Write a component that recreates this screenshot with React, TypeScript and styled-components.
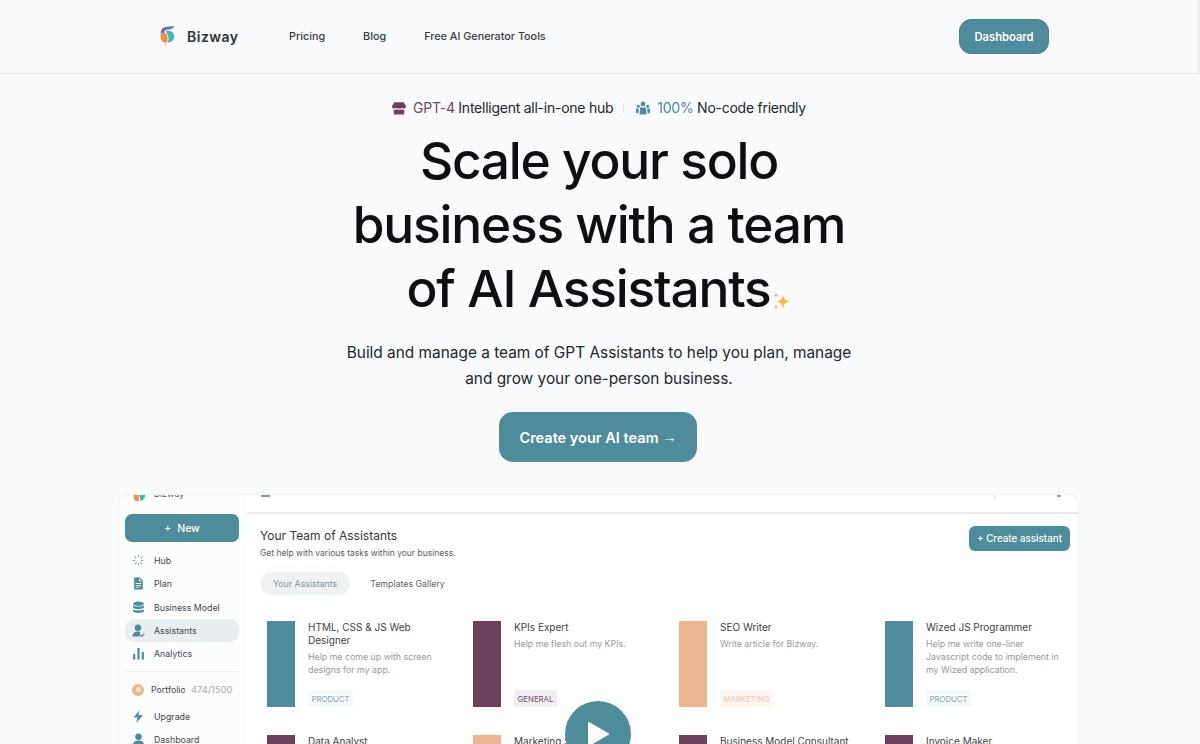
import React from 'react';
import styled, { createGlobalStyle } from 'styled-components';

const teal = '#4f8c9b';
const plum = '#6d415c';
const peach = '#ebb690';

const GlobalStyle = createGlobalStyle`
  html, body {
    margin: 0;
    height: 744px;
    overflow: hidden;
    background: #f9fafc;
    font-family: Inter, "Noto Sans", sans-serif;
    color: #111418;
  }
  * { box-sizing: border-box; }
`;

const Page = styled.div`
  height: 744px;
  overflow: hidden;
  display: flex;
  flex-direction: column;
`;

const Nav = styled.header`
  height: 74px;
  flex: none;
  display: flex;
  align-items: center;
  padding: 0 149px 1px 159px;
  border-bottom: 1px solid #e3e5e8;
  border-right: 2px solid #eceef0;
`;

const Brand = styled.div`
  display: flex;
  align-items: center;
  gap: 12px;
  width: 130px;
  font-size: 14px;
  font-weight: 600;
  letter-spacing: 0.5px;
  color: #2e3138;
`;

const NavLinks = styled.nav`
  display: flex;
  gap: 38px;
  flex: 1;
`;

const NavLink = styled.span`
  font-size: 10.8px;
  font-weight: 500;
  color: #3a3d44;
`;

const DashButton = styled.div`
  width: 90px;
  height: 35px;
  margin-top: 1px;
  border-radius: 12px;
  background: ${teal};
  border: 1px solid #47808e;
  color: #fff;
  font-size: 11.2px;
  font-weight: 600;
  display: flex;
  align-items: center;
  justify-content: center;
`;

const Hero = styled.section`
  display: flex;
  flex-direction: column;
  align-items: center;
  padding: 23px 2px 0 0;
`;

const BadgeRow = styled.div`
  display: flex;
  align-items: center;
  height: 21px;
  font-size: 14px;
  letter-spacing: -0.25px;
  color: #23262c;
`;

const Badge = styled.div`
  display: flex;
  align-items: center;
  gap: 7px;
`;

const BadgeDivider = styled.i`
  width: 1px;
  height: 12px;
  background: #e6e8ec;
  margin: 0 12px 0 10px;
`;

const Accent = styled.span<{ $color: string }>`
  color: ${(p) => p.$color};
`;

const Title = styled.h1`
  margin: 10px 0 0;
  font-size: 51.4px;
  line-height: 64px;
  font-weight: 500;
  letter-spacing: -1.2px;
  text-align: center;
  color: #0d0f12;
`;

const Sparkle = styled.svg`
  width: 19px;
  height: 19px;
  margin-left: 2px;
  vertical-align: -4px;
`;

const Lead = styled.p`
  margin: 20px 0 0;
  font-size: 15.4px;
  line-height: 26px;
  text-align: center;
  color: #23262c;
`;

const Cta = styled.div`
  margin: 20px 2px 0 0;
  width: 198px;
  height: 50px;
  border-radius: 14px;
  background: ${teal};
  color: #fff;
  font-size: 14.5px;
  font-weight: 600;
  display: flex;
  align-items: center;
  justify-content: center;
  gap: 4px;
`;

const CtaArrow = styled.span`
  font-family: "Liberation Sans", sans-serif;
  font-weight: 400;
  font-size: 14px;
`;

const PreviewWrap = styled.div`
  position: relative;
  margin: 32px 121px 0 118px;
  height: 250px;
  flex: none;
`;

const Preview = styled.div`
  height: 100%;
  overflow: hidden;
  display: grid;
  grid-template-columns: 128px 1fr;
  background: #fff;
  border: 1px solid #eef0f2;
  border-bottom: 0;
  border-radius: 10px 10px 0 0;
`;

const Sidebar = styled.aside`
  background: #fbfcfc;
  padding: 0 8px 0 6px;
  display: flex;
  flex-direction: column;
`;

const SideLogo = styled.div`
  height: 19px;
  flex: none;
  overflow: hidden;
  display: flex;
  align-items: flex-start;
  gap: 8px;
  padding-left: 8px;
  font-size: 9px;
  line-height: 12px;
  color: #55585e;
`;

const CutLogoText = styled.span`
  margin-top: -7px;
`;

const NewButton = styled.div`
  height: 28px;
  flex: none;
  border-radius: 7px;
  background: ${teal};
  color: #fff;
  font-size: 10.5px;
  font-weight: 500;
  display: flex;
  align-items: center;
  justify-content: center;
  gap: 6px;
  margin-bottom: 7px;
`;

const SideItem = styled.div<{ $active?: boolean }>`
  height: 23.3px;
  flex: none;
  display: flex;
  align-items: center;
  gap: 9px;
  padding-left: 7px;
  border-radius: 9px;
  font-size: 8.8px;
  color: #44474e;
  background: ${(p) => (p.$active ? '#e9eef0' : 'transparent')};
`;

const SideIcon = styled.svg`
  width: 13px;
  height: 13px;
  flex: none;
  fill: ${teal};
`;

const SideDivider = styled.hr`
  width: 100%;
  border: 0;
  border-top: 1px solid #eef0f2;
  margin: 6px 0 6px;
`;

const UsageRow = styled.div`
  height: 23px;
  flex: none;
  display: flex;
  align-items: center;
  gap: 7px;
  padding-left: 7px;
  font-size: 8.8px;
  color: #44474e;
  margin-bottom: 3px;
`;

const UsageDot = styled.span`
  width: 12px;
  height: 12px;
  border-radius: 50%;
  background: ${peach};
  flex: none;
  display: flex;
  align-items: center;
  justify-content: center;
  &::after {
    content: '';
    width: 5px;
    height: 5px;
    border-radius: 50%;
    background: #fbe6d6;
  }
`;

const UsageLabel = styled.span`
  width: 34px;
  overflow: hidden;
  white-space: nowrap;
`;

const UsageCount = styled.span`
  margin-left: -1px;
  font-size: 9.3px;
  color: #a9acb0;
`;

const Main = styled.main`
  display: flex;
  flex-direction: column;
  min-width: 0;
`;

const TopBar = styled.div`
  height: 19px;
  flex: none;
  border-bottom: 2px solid #e9eaec;
  display: flex;
  padding: 0 17px 0 14px;
  justify-content: space-between;
`;

const TopTick = styled.i`
  width: 9px;
  height: 2px;
  background: #7d9aa3;
`;

const TopRight = styled.div`
  width: 67px;
  height: 4px;
  border-left: 1px solid #d9dbde;
  display: flex;
  justify-content: flex-end;
  &::after {
    content: '';
    width: 4px;
    height: 2px;
    background: #9a9da2;
  }
`;

const MainBody = styled.div`
  padding: 12px 8px 0 13px;
  flex: 1;
  min-height: 0;
`;

const MainHead = styled.div`
  display: flex;
  justify-content: space-between;
  align-items: flex-start;
`;

const MainTitle = styled.div`
  margin-top: 1px;
  font-size: 12px;
  line-height: 17px;
  color: #33363c;
`;

const MainSub = styled.div`
  font-size: 8.5px;
  line-height: 14px;
  margin-top: 2px;
  color: #5a5d63;
`;

const CreateButton = styled.div`
  width: 101px;
  height: 25px;
  border-radius: 6px;
  background: ${teal};
  color: #fff;
  font-size: 9.8px;
  font-weight: 500;
  display: flex;
  align-items: center;
  justify-content: center;
`;

const Tabs = styled.div`
  display: flex;
  gap: 7px;
  margin-top: 12px;
`;

const Tab = styled.div<{ $active?: boolean }>`
  height: 23px;
  padding: 0 13px;
  border-radius: 12px;
  font-size: 8.8px;
  display: flex;
  align-items: center;
  color: ${(p) => (p.$active ? '#7f949b' : '#5f6268')};
  background: ${(p) => (p.$active ? '#eef2f3' : 'transparent')};
`;

const CardGrid = styled.div`
  display: grid;
  grid-template-columns: repeat(4, 206px);
  grid-auto-rows: 86px;
  row-gap: 28px;
  margin: 26px 0 0 7px;
`;

const AssistantCard = styled.div`
  display: flex;
  gap: 13px;
`;

const ColorBar = styled.div<{ $color: string }>`
  width: 28px;
  flex: none;
  background: ${(p) => p.$color};
`;

const CardBody = styled.div`
  width: 140px;
  display: flex;
  flex-direction: column;
  align-items: flex-start;
`;

const CardTitle = styled.div`
  font-size: 10px;
  line-height: 13px;
  margin-bottom: 3px;
  color: #3e4147;
`;

const CardText = styled.div`
  font-size: 8.8px;
  line-height: 13px;
  color: #96999e;
`;

const Tag = styled.span<{ $color: string; $bg: string }>`
  margin-top: auto;
  height: 17px;
  padding: 0 3.5px;
  display: flex;
  align-items: center;
  font-size: 7.8px;
  color: ${(p) => p.$color};
  background: ${(p) => p.$bg};
`;

const PlayButton = styled.div`
  position: absolute;
  left: 447px;
  top: 207px;
  width: 66px;
  height: 66px;
  border-radius: 50%;
  background: ${teal};
  display: flex;
  align-items: center;
  justify-content: center;
`;

const tags = {
  PRODUCT: { color: '#8aa7b0', bg: '#f6f9f9' },
  GENERAL: { color: '#6d5566', bg: '#f2edf2' },
  MARKETING: { color: '#efc9ae', bg: '#fdf6f1' },
};

type TagName = keyof typeof tags;

const assistants: { title: string; text?: string; color: string; tag?: TagName }[] = [
  { title: 'HTML, CSS & JS Web Designer', text: 'Help me come up with screen designs for my app.', color: teal, tag: 'PRODUCT' },
  { title: 'KPIs Expert', text: 'Help me flesh out my KPIs.', color: plum, tag: 'GENERAL' },
  { title: 'SEO Writer', text: 'Write article for Bizway.', color: peach, tag: 'MARKETING' },
  { title: 'Wized JS Programmer', text: 'Help me write one-liner Javascript code to implement in my Wized application.', color: teal, tag: 'PRODUCT' },
  { title: 'Data Analyst', color: plum },
  { title: 'Marketing Strategist', color: peach },
  { title: 'Business Model Consultant', color: plum },
  { title: 'Invoice Maker', color: plum },
];

const LogoMark: React.FC<{ size: number }> = ({ size }) => (
  <svg width={size} height={size * 1.2} viewBox="0 0 20 24">
    <path d="M2 9Q2 2 9 1L19 0Q18 3 15 4L8 5Q6 6 7 9Z" fill="#7f6aa8" />
    <path d="M2 9 9 9Q12 14 10 21L6 20Q2 18 2 14Z" fill="#f0903f" />
    <path d="M8 6Q19 5 19 13 19 19 11 21 14 14 8 6Z" fill="#45b3bd" />
    <circle cx="8" cy="23" r="1" fill="#f0a070" />
  </svg>
);

const HubIcon = () => (
  <SideIcon viewBox="0 0 24 24" style={{ fill: 'none' }}>
    <path
      d="M12 2v5M12 17v5M2 12h5M17 12h5M5 5l3 3M16 16l3 3M19 5l-3 3M8 16l-3 3"
      stroke="#7fb0bc"
      strokeWidth="2"
      strokeLinecap="round"
      strokeDasharray="3 2"
    />
  </SideIcon>
);

const PlanIcon = () => (
  <SideIcon viewBox="0 0 24 24">
    <path d="M4 1h10l6 6v16H4zM13 3v5h5zM7 11v2h10v-2zM7 15v2h10v-2zM7 19v1h7v-1z" fillRule="evenodd" />
  </SideIcon>
);

const DatabaseIcon = () => (
  <SideIcon viewBox="0 0 24 24">
    <ellipse cx="12" cy="5" rx="10" ry="4" />
    <path d="M2 8c2 3 18 3 20 0v4c-2 4-18 4-20 0zM2 15c2 3 18 3 20 0v4c-1 4-19 4-20 0z" />
  </SideIcon>
);

const UserCheckIcon = () => (
  <SideIcon viewBox="0 0 24 24">
    <circle cx="11" cy="7" r="6" />
    <path d="M1 23c0-6 4-9 10-9 2 0 3 0 4 1l-1 8z" />
    <path d="M15 20l3 3 5-5" fill="none" stroke={teal} strokeWidth="2" />
  </SideIcon>
);

const ChartIcon = () => (
  <SideIcon viewBox="0 0 24 24">
    <path d="M2 13h4v10H2zM10 2h4v21h-4zM18 9h4v14h-4z" />
  </SideIcon>
);

const ZapIcon = () => (
  <SideIcon viewBox="0 0 24 24">
    <path d="M14 0 3 14h7l-2 10 12-15h-8z" />
  </SideIcon>
);

const UserIcon = () => (
  <SideIcon viewBox="0 0 24 24">
    <circle cx="12" cy="7" r="6" />
    <path d="M1 24c0-7 5-10 11-10s11 3 11 10z" />
  </SideIcon>
);

const App: React.FC = () => (
  <Page>
    <GlobalStyle />
    <Nav>
      <Brand>
        <LogoMark size={16} />
        Bizway
      </Brand>
      <NavLinks>
        <NavLink>Pricing</NavLink>
        <NavLink>Blog</NavLink>
        <NavLink>Free AI Generator Tools</NavLink>
      </NavLinks>
      <DashButton>Dashboard</DashButton>
    </Nav>

    <Hero>
      <BadgeRow>
        <Badge>
          <svg width="14" height="14" viewBox="0 0 24 22">
            <path d="M4 1h16l4 7c0 2-1 4-3 4-1 0-3-1-3-2 0 1-3 2-6 2s-6-1-6-2c0 1-2 2-3 2-2 0-3-2-3-4z" fill={plum} />
            <path d="M3 14c2 0 3 0 4-1 1 1 3 1 5 1s4 0 5-1c1 1 2 1 4 1v8H3z" fill={plum} />
          </svg>
          <span>
            <Accent $color="#6f4a62">GPT-4</Accent> Intelligent all-in-one hub
          </span>
        </Badge>
        <BadgeDivider />
        <Badge>
          <svg width="14" height="14" viewBox="0 0 24 24" fill={teal}>
            <circle cx="12" cy="5" r="4" />
            <circle cx="4" cy="9" r="2.6" />
            <circle cx="20" cy="9" r="2.6" />
            <path d="M7 11h10l1 12H6zM0 13h5l-1 8H0zM19 13h5v8h-4z" />
          </svg>
          <span>
            <Accent $color={teal}>100%</Accent> No-code friendly
          </span>
        </Badge>
      </BadgeRow>

      <Title>
        Scale your solo
        <br />
        business with a team
        <br />
        of AI Assistants
        <Sparkle viewBox="0 0 24 24">
          <path d="M14 3c1 6 3 8 9 9-6 1-8 3-9 9-1-6-3-8-9-9 6-1 8-3 9-9z" fill="#f5bb3f" />
          <path d="M5 1c.4 2 1 3 3 3-2 .4-2.6 1-3 3-.4-2-1-2.6-3-3 2 0 2.6-1 3-3zM5 16c.4 2 1 2.6 3 3-2 .4-2.6 1-3 3-.4-2-1-2.6-3-3 2-.4 2.6-1 3-3z" fill="#f3b05a" />
        </Sparkle>
      </Title>

      <Lead>
        Build and manage a team of GPT Assistants to help you plan, manage
        <br />
        and grow your one-person business.
      </Lead>

      <Cta>
        Create your AI team
        <CtaArrow>→</CtaArrow>
      </Cta>
    </Hero>

    <PreviewWrap>
      <Preview>
        <Sidebar>
          <SideLogo>
            <svg width="13" height="6" viewBox="0 0 20 9">
              <path d="M1 0h8v9H4Q1 7 1 3z" fill="#f0903f" />
              <path d="M10 0h9Q18 8 11 9z" fill="#45b3bd" />
            </svg>
            <CutLogoText>Bizway</CutLogoText>
          </SideLogo>
          <NewButton>
            <span>+</span>
            <span>New</span>
          </NewButton>
          <SideItem><HubIcon />Hub</SideItem>
          <SideItem><PlanIcon />Plan</SideItem>
          <SideItem><DatabaseIcon />Business Model</SideItem>
          <SideItem $active><UserCheckIcon />Assistants</SideItem>
          <SideItem><ChartIcon />Analytics</SideItem>
          <SideDivider />
          <UsageRow>
            <UsageDot />
            <UsageLabel>Portfolio</UsageLabel>
            <UsageCount>474/1500</UsageCount>
          </UsageRow>
          <SideItem><ZapIcon />Upgrade</SideItem>
          <SideItem><UserIcon />Dashboard</SideItem>
        </Sidebar>

        <Main>
          <TopBar>
            <TopTick />
            <TopRight />
          </TopBar>
          <MainBody>
            <MainHead>
              <div>
                <MainTitle>Your Team of Assistants</MainTitle>
                <MainSub>Get help with various tasks within your business.</MainSub>
              </div>
              <CreateButton>+ Create assistant</CreateButton>
            </MainHead>
            <Tabs>
              <Tab $active>Your Assistants</Tab>
              <Tab>Templates Gallery</Tab>
            </Tabs>
            <CardGrid>
              {assistants.map((a) => (
                <AssistantCard key={a.title}>
                  <ColorBar $color={a.color} />
                  <CardBody>
                    <CardTitle>{a.title}</CardTitle>
                    {a.text && <CardText>{a.text}</CardText>}
                    {a.tag && (
                      <Tag $color={tags[a.tag].color} $bg={tags[a.tag].bg}>
                        {a.tag}
                      </Tag>
                    )}
                  </CardBody>
                </AssistantCard>
              ))}
            </CardGrid>
          </MainBody>
        </Main>
      </Preview>
      <PlayButton>
        <svg width="24" height="26" viewBox="0 0 24 26">
          <path d="M3 2 22 13 3 24z" fill="#fff" stroke="#fff" strokeWidth="2" strokeLinejoin="round" />
        </svg>
      </PlayButton>
    </PreviewWrap>
  </Page>
);

export default App;
